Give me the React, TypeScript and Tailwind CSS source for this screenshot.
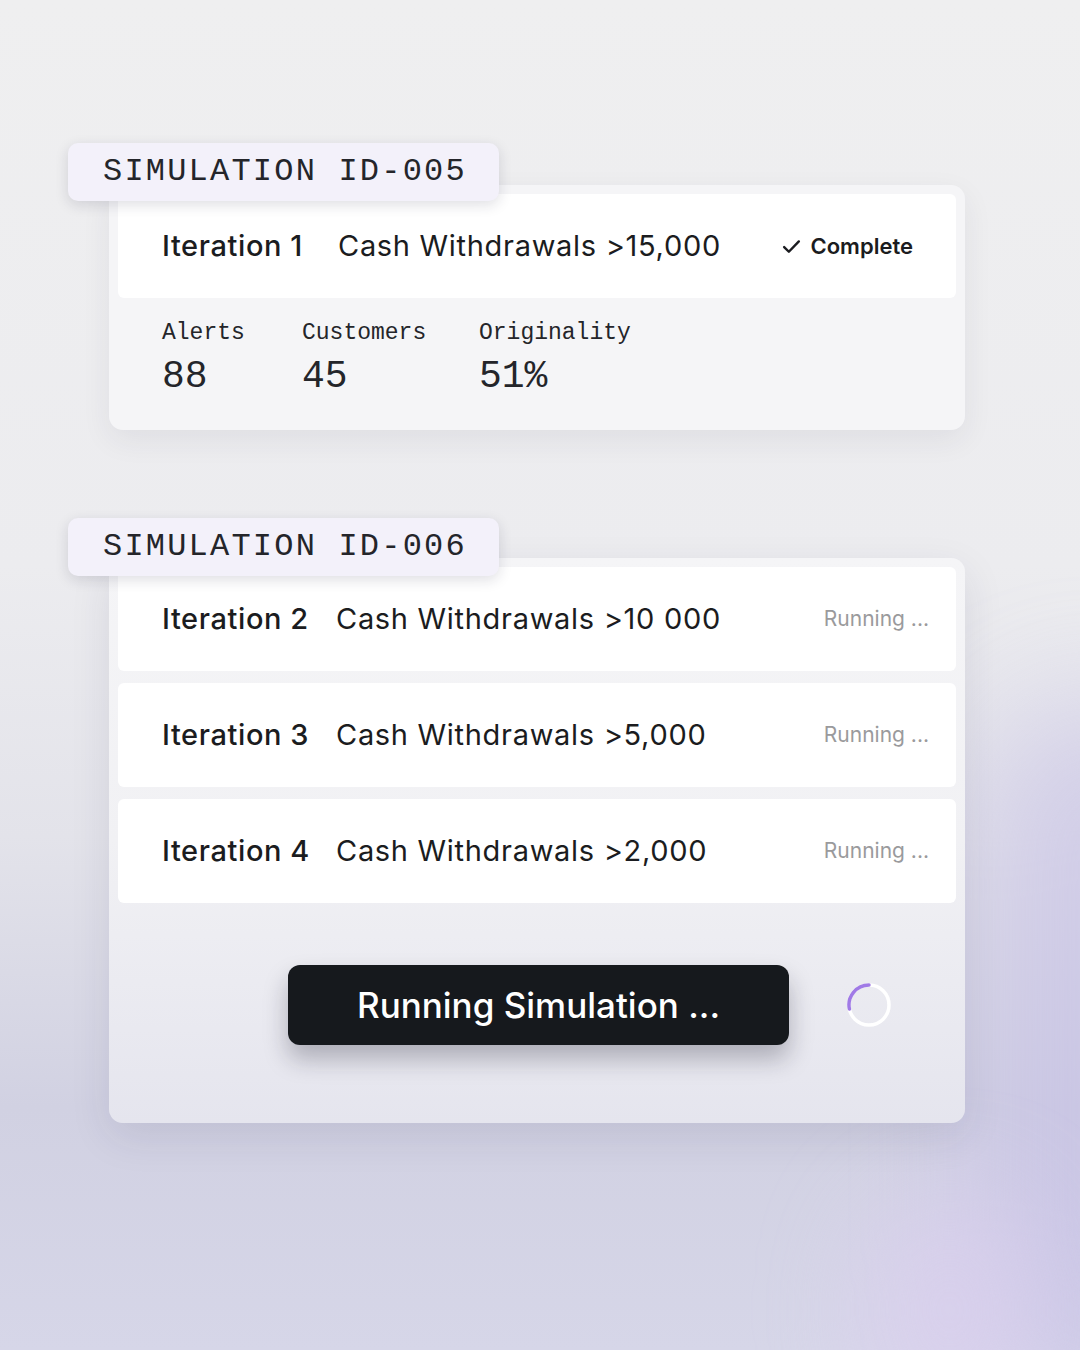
const sans = "font-['Inter','Noto_Sans',sans-serif]";
const mono = "font-['Liberation_Mono','DejaVu_Sans_Mono',monospace]";

type Iteration = {
    label: string;
    rule: string;
    done?: boolean;
};

const running: Iteration[] = [
    { label: "Iteration 2", rule: "Cash Withdrawals >10 000" },
    { label: "Iteration 3", rule: "Cash Withdrawals >5,000" },
    { label: "Iteration 4", rule: "Cash Withdrawals >2,000" }
];

const stats = [
    { title: "Alerts", value: "88", width: "w-[140px]" },
    { title: "Customers", value: "45", width: "w-[177px]" },
    { title: "Originality", value: "51%", width: "w-[170px]" }
];

function Tag({ id }: { id: string }) {
    return (
        <div className="relative z-10 flex h-[58px] w-[431px] items-center rounded-[10px] bg-[#f3f1fa] pl-[35px] shadow-[0_4px_14px_rgba(30,30,60,0.14)]">
            <span className={`${mono} text-[32px] leading-none tracking-[2.2px] text-[#24252a]`}>SIMULATION ID-{id}</span>
        </div>
    );
}

function Row({ item }: { item: Iteration }) {
    return (
        <div className={`flex h-[104px] items-center rounded-[6px] bg-white pl-[44px] ${item.done ? "pr-[43px]" : "pr-[27px]"}`}>
            <span className={`${item.done ? "w-[176px]" : "w-[174px]"} text-[29px] font-medium tracking-[0.6px] text-[#1b1c20]`}>{item.label}</span>
            <span className="flex-1 text-[29px] tracking-[0.7px] text-[#1b1c20]">{item.rule}</span>
            {item.done ? (
                <span className="flex items-center gap-[9px] text-[22px] font-semibold text-[#1b1c20]">
                    <svg width="21" height="21" viewBox="0 0 20 20" fill="none">
                        <path d="M3 10.5l4.5 4.5L17 5.2" stroke="#1b1c20" strokeWidth="2.3" strokeLinecap="round" strokeLinejoin="round" />
                    </svg>
                    Complete
                </span>
            ) : (
                <span className="text-[21px] text-[#9a9a9c]">Running ...</span>
            )}
        </div>
    );
}

function Spinner() {
    return (
        <svg width="46" height="46" viewBox="0 0 46 46" fill="none">
            <circle cx="23" cy="23" r="20" stroke="#ffffff" strokeWidth="3.5" />
            <path d="M3.4 27 A20 20 0 0 1 23 3" stroke="#a07ae6" strokeWidth="3.5" strokeLinecap="round" />
        </svg>
    );
}

export default function App() {
    return (
        <div className={`${sans} relative h-[1350px] w-[1080px] overflow-hidden bg-[linear-gradient(180deg,#efeff0_0%,#ececef_42%,#e3e3ea_62%,#d1d1e2_82%,#d6d6e8_100%)]`}>
            <div className="pointer-events-none absolute right-[-140px] top-[700px] h-[700px] w-[240px] rounded-full bg-[#c4bde6] opacity-55 blur-[60px]" />
            <div className="pointer-events-none absolute bottom-[-80px] right-[40px] h-[240px] w-[180px] rounded-full bg-[#dccff0] opacity-60 blur-[50px]" />

            <div className="relative flex flex-col pl-[68px] pt-[143px]">
                <Tag id="005" />
                <div className="ml-[41px] mt-[-16px] w-[856px] rounded-[14px] bg-[#f5f5f7] px-[9px] pt-[9px] shadow-[0_10px_30px_rgba(40,40,70,0.07)]">
                    <Row item={{ label: "Iteration 1", rule: "Cash Withdrawals >15,000", done: true }} />
                    <div className="flex h-[132px] pl-[44px] pt-[21px]">
                        {stats.map((s) => (
                            <div key={s.title} className={`${s.width} flex flex-col`}>
                                <span className={`${mono} text-[23px] leading-[28px] text-[#24252a]`}>{s.title}</span>
                                <span className={`${mono} mt-[8px] text-[38px] leading-[44px] text-[#24252a]`}>{s.value}</span>
                            </div>
                        ))}
                    </div>
                </div>

                <div className="mt-[88px]">
                    <Tag id="006" />
                </div>
                <div className="ml-[41px] mt-[-18px] flex w-[856px] flex-col rounded-[14px] bg-[linear-gradient(180deg,#f5f5f7_0%,#f1f1f4_50%,#e5e5ee_100%)] px-[9px] pt-[9px] shadow-[0_14px_40px_rgba(40,40,80,0.10)]">
                    <div className="flex flex-col gap-[12px]">
                        {running.map((item) => (
                            <Row key={item.label} item={item} />
                        ))}
                    </div>
                    <div className="flex h-[220px] items-start pl-[170px] pt-[62px]">
                        <div className="flex h-[80px] w-[501px] items-center justify-center rounded-[12px] bg-[#16191d] shadow-[0_14px_24px_rgba(20,20,40,0.28)]">
                            <span className="text-[35px] font-medium text-white">Running Simulation ...</span>
                        </div>
                        <div className="ml-[57px] mt-[17px]">
                            <Spinner />
                        </div>
                    </div>
                </div>
            </div>
        </div>
    );
}
